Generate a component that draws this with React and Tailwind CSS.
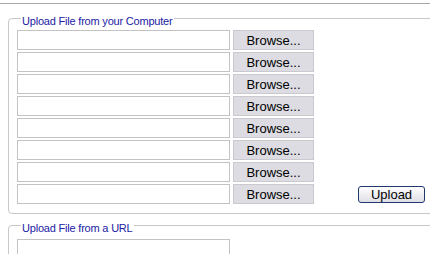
import React from 'react';

function FileRow({ children }) {
  return (
    <div className="flex items-center gap-[3px]">
      <input type="text" className="w-[213px] h-[20px] border border-[#c3c3c3] bg-white outline-none" />
      <button className="w-[81px] h-[20px] border border-[#c9c9cf] bg-[#dcdce2] text-[13px] text-black leading-none">
        Browse...
      </button>
      {children}
    </div>
  );
}

export default function App() {
  const rows = [0, 1, 2, 3, 4, 5, 6];

  return (
    <div className="relative w-[430px] h-[254px] overflow-hidden bg-white font-['Liberation_Sans',Arial,sans-serif]">
      <div className="mt-[3px] h-px w-full bg-[#a8a8a8]" />

      <fieldset className="ml-2 mt-[4px] w-[440px] border border-[#c8c8c8] rounded-[4px] pl-2 pt-px pb-[9px]">
        <legend className="ml-[4px] px-px pt-[6px] text-[11px] tracking-[-0.2px] leading-[15px] text-[#2121a6]">
          Upload File from your Computer
        </legend>
        <div className="flex flex-col gap-[2px]">
          {rows.map((r) => (
            <FileRow key={r} />
          ))}
          <FileRow>
            <button className="ml-[41px] w-[67px] h-[17px] rounded-[3px] border border-[#1f3a6b] bg-gradient-to-b from-white to-[#dedee6] text-[13px] leading-none text-black">
              Upload
            </button>
          </FileRow>
        </div>
      </fieldset>

      <fieldset className="ml-2 mt-px w-[440px] border border-[#c8c8c8] rounded-[4px] pl-2 pt-px pb-[9px]">
        <legend className="ml-[4px] px-px pt-[6px] text-[11px] tracking-[-0.2px] leading-[15px] text-[#2121a6]">
          Upload File from a URL
        </legend>
        <input type="text" className="w-[213px] h-[20px] border border-[#c3c3c3] bg-white outline-none" />
      </fieldset>
    </div>
  );
}
